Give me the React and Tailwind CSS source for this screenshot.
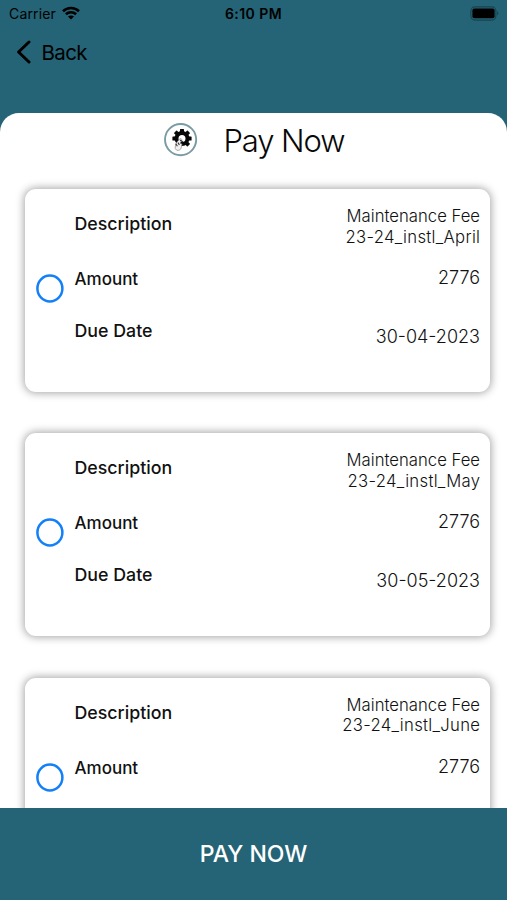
import React from 'react';

const fees = [
  { id: 1, title: 'Maintenance Fee', name: '23-24_instl_April', amount: '2776', dueDate: '30-04-2023' },
  { id: 2, title: 'Maintenance Fee', name: '23-24_instl_May', amount: '2776', dueDate: '30-05-2023' },
  { id: 3, title: 'Maintenance Fee', name: '23-24_instl_June', amount: '2776' },
];

const StatusBar = () => {
  return (
    <div className="grid grid-cols-3 items-center h-7 pl-[9px] pr-[7px] text-[14px] leading-7">
      <div className="flex items-center gap-[6px]">
        <span className="tracking-[0.15px]">Carrier</span>
        <svg className="w-[18px] h-[14px] -mt-[2px]" viewBox="0 0 18 14" fill="none" stroke="#000" strokeWidth="2.6">
          <path d="M1 5.2C5.4 0.9 12.6 0.9 17 5.2" />
          <path d="M3.9 8.3C6.8 5.6 11.2 5.6 14.1 8.3" />
          <path d="M9 13.5L6 10.5C7.6 9.1 10.4 9.1 12 10.5Z" fill="#000" stroke="none" />
        </svg>
      </div>
      <span className="-ml-[2px] text-center font-semibold tracking-[0.45px] whitespace-nowrap">6:10 PM</span>
      <svg className="w-[30px] h-[15px] -mt-[2px] justify-self-end" viewBox="0 0 30 15">
        <rect x="0.9" y="0.9" width="25" height="13.2" rx="4" fill="none" stroke="#174350" strokeWidth="1.1" />
        <rect x="2.4" y="2.6" width="22.2" height="9.6" rx="2" />
        <path d="M27.2 5.2C28.8 5.8 28.8 8.8 27.2 9.4Z" fill="#174350" />
      </svg>
    </div>
  );
};

const GearLogo = () => {
  return (
    <svg className="-mt-[2px] w-[34px] h-[34px]" viewBox="0 0 34 34">
      <circle cx="16.6" cy="16.6" r="15.6" fill="#fff" stroke="#799ba5" strokeWidth="1.9" />
      <g transform="translate(18 15.5)">
        <circle r="5.5" fill="none" stroke="#080808" strokeWidth="4" />
        <g fill="#080808">
          <rect x="-2" y="-9.6" width="4" height="4" rx="0.6" />
          <rect x="-2" y="-9.6" width="4" height="4" rx="0.6" transform="rotate(45)" />
          <rect x="-2" y="-9.6" width="4" height="4" rx="0.6" transform="rotate(90)" />
          <rect x="-2" y="-9.6" width="4" height="4" rx="0.6" transform="rotate(135)" />
          <rect x="-2" y="-9.6" width="4" height="4" rx="0.6" transform="rotate(270)" />
          <rect x="-2" y="-9.6" width="4" height="4" rx="0.6" transform="rotate(315)" />
        </g>
      </g>
      <path
        d="M11.6 21L15.4 16.2C16.6 14.8 18.4 16 17.6 17.6L16 20.2L18 21.2L17 25.4C16 28 11.8 28 11.2 25.3Z"
        fill="#f1f1f1"
        stroke="#888"
        strokeWidth="0.7"
      />
      <path d="M11.8 20.8L13.4 23.2M14 19.6L15.4 22M16 17L19 19" stroke="#333" strokeWidth="1.1" />
    </svg>
  );
};

const FeeCard = ({ fee }) => {
  return (
    <div className="flex h-[203px] shrink-0 rounded-[11px] bg-white pl-[11px] pr-[10px] shadow-[0_0_9px_1px_rgba(0,0,0,0.36)]">
      <button className="mt-[85px] h-[29px] w-7 shrink-0" aria-label="Select">
        <svg className="h-[29px] w-7" viewBox="0 0 28 29">
          <ellipse cx="13.9" cy="14.5" rx="12.5" ry="12.9" fill="none" stroke="#1380f8" strokeWidth="2.5" />
        </svg>
      </button>
      <div className="ml-[10.5px] flex flex-col text-[17.8px] font-medium text-[#111] whitespace-nowrap">
        <span className="mt-[25px] h-5 leading-[20.5px]">Description</span>
        <span className="mt-[34px] h-5 text-[17px] leading-[22px]">Amount</span>
        {fee.dueDate && <span className="mt-[33px] h-5 leading-[20.5px]">Due Date</span>}
      </div>
      <div className="ml-auto flex flex-col text-right font-light text-[#111] whitespace-nowrap">
        <span className="mt-[17px] h-[20.5px] text-[16.7px] leading-[20.5px]">{fee.title}</span>
        <span className="h-[20.5px] text-[16.7px] leading-[20.5px] tracking-[0.3px] -mr-[0.3px]">{fee.name}</span>
        <span className="mt-5 h-5 text-[18px] leading-[22px]">{fee.amount}</span>
        {fee.dueDate && <span className="mt-[39px] h-5 text-[18px] leading-[22px]">{fee.dueDate}</span>}
      </div>
    </div>
  );
};

const App = () => {
  return (
    <div className="flex h-[900px] w-[507px] flex-col overflow-hidden bg-[#246476] font-['Inter',sans-serif] text-black">
      <StatusBar />
      <div className="flex h-[85px] items-start pl-[16px]">
        <svg className="mt-[12px] h-6 w-4" viewBox="0 0 16 24" fill="none" stroke="#000" strokeWidth="3" strokeLinecap="round" strokeLinejoin="round">
          <path d="M13 2L2.6 12L13 22" />
        </svg>
        <span className="ml-[9.5px] mt-[12px] text-[20.5px] leading-[25px] tracking-[-0.6px]">Back</span>
      </div>

      <div className="flex min-h-0 flex-1 flex-col overflow-hidden rounded-t-[19px] bg-white">
        <div className="flex h-[55px] shrink-0 items-center pl-[164px]">
          <GearLogo />
          <h1 className="ml-[25.5px] text-[31px] font-light leading-[56px] tracking-[-1.1px] text-[#080808]">Pay Now</h1>
        </div>
        <div className="flex flex-col gap-[41.4px] pl-[25px] pr-[17px] pt-[21px]">
          {fees.map((fee) => (
            <FeeCard key={fee.id} fee={fee} />
          ))}
        </div>
      </div>

      <button className="h-[91.6px] shrink-0 bg-[#246476] text-[23px] font-medium leading-[92px] text-white">
        PAY NOW
      </button>
    </div>
  );
};

export default App;
